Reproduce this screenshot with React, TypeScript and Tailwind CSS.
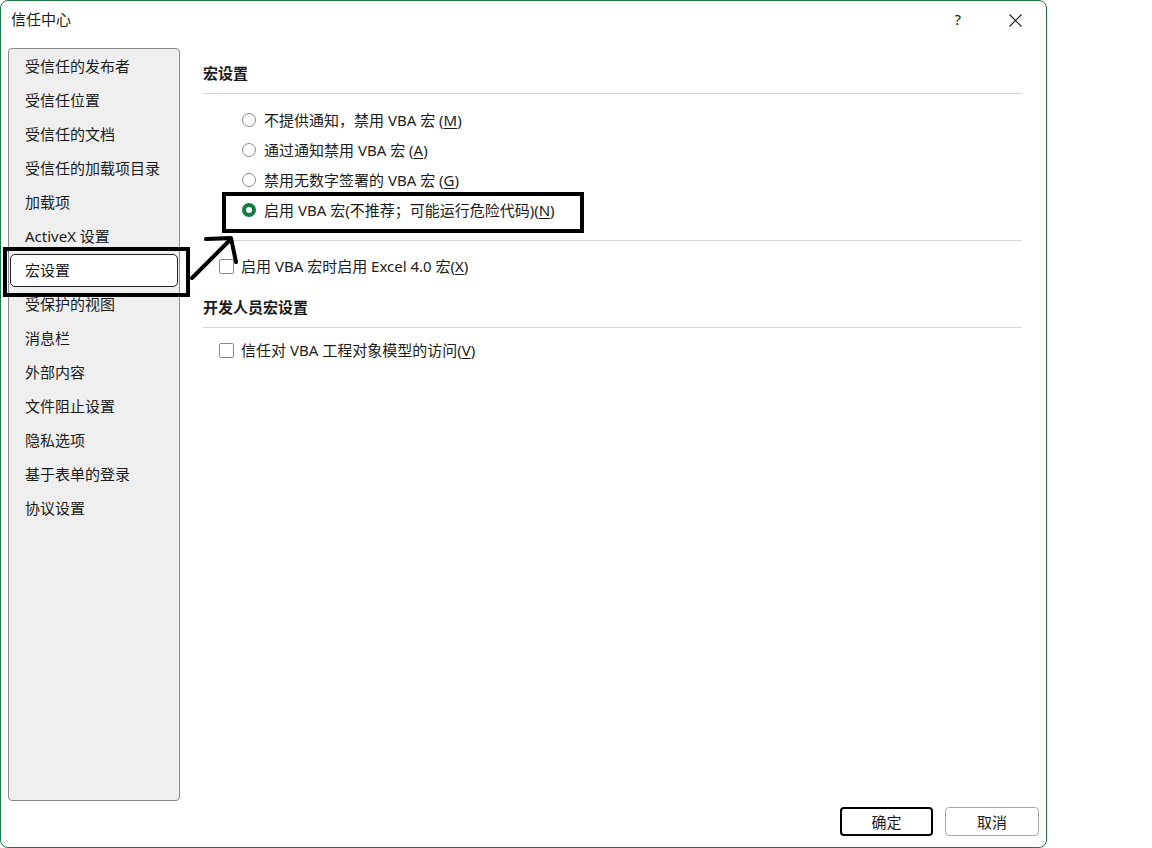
const font = { fontFamily: '"Noto Sans", "Noto Sans CJK SC", sans-serif' };

const navItems = [
  "受信任的发布者",
  "受信任位置",
  "受信任的文档",
  "受信任的加载项目录",
  "加载项",
  "ActiveX 设置",
  "宏设置",
  "受保护的视图",
  "消息栏",
  "外部内容",
  "文件阻止设置",
  "隐私选项",
  "基于表单的登录",
  "协议设置",
];

const radios = [
  { label: "不提供通知，禁用 VBA 宏 ", key: "M", checked: false },
  { label: "通过通知禁用 VBA 宏 ", key: "A", checked: false },
  { label: "禁用无数字签署的 VBA 宏 ", key: "G", checked: false },
  { label: "启用 VBA 宏(不推荐；可能运行危险代码)", key: "N", checked: true },
];

const Radio = ({ checked }: { checked: boolean }) =>
  checked ? (
    <span className="box-border h-[14px] w-[14px] shrink-0 rounded-full border-[4px] border-[#107c41] bg-white" />
  ) : (
    <span className="box-border h-[14px] w-[14px] shrink-0 rounded-full border border-[#8a8a8a] bg-white" />
  );

const Checkbox = () => (
  <span className="box-border h-[15px] w-[15px] shrink-0 rounded-[2px] border border-[#8a8a8a] bg-white" />
);

const Label = ({ text, k }: { text: string; k: string }) => (
  <span>
    {text}(<span className="underline underline-offset-2">{k}</span>)
  </span>
);

export default function App() {
  return (
    <div
      className="relative h-[848px] w-[1152px] overflow-hidden bg-white text-[15px] leading-[20px] text-[#1b1b1b]"
      style={font}
    >
      <div className="box-border flex h-[848px] w-[1047px] flex-col rounded-[8px] border border-[#1c7c46] bg-white">
        {/* title bar */}
        <div className="flex h-[47px] shrink-0 items-start">
          <span className="ml-[10px] mt-[8px]">信任中心</span>
          <span className="ml-auto mt-[8px]">?</span>
          <svg className="ml-[48px] mr-[24px] mt-[13px]" width="13" height="13" viewBox="0 0 13 13">
            <path d="M0.5 0.5 L12.5 12.5 M12.5 0.5 L0.5 12.5" stroke="#1b1b1b" strokeWidth="1.1" />
          </svg>
        </div>

        {/* body */}
        <div className="flex h-[753px] shrink-0 pl-[7px] pr-[24px]">
          <ul className="box-border w-[172px] shrink-0 rounded-[4px] border border-[#8a8a8a] bg-[#efefef] pt-[-1px]">
            {navItems.map((item) =>
              item === "宏设置" ? (
                <li key={item} className="flex h-[34px] items-center">
                  <span className="mx-[1px] box-border flex h-[33px] w-full items-center rounded-[5px] border border-[#222] bg-white pl-[14px]">
                    {item}
                  </span>
                </li>
              ) : (
                <li key={item} className="flex h-[34px] items-center pl-[16px]">
                  {item}
                </li>
              )
            )}
          </ul>

          <div className="ml-[23px] flex flex-1 flex-col pt-[15px]">
            <h2 className="font-bold">宏设置</h2>
            <div className="mt-[10px] h-px bg-[#d6d6d6]" />
            <div className="mt-[11px] flex flex-col pl-[39px]">
              {radios.map((r) => (
                <div key={r.key} className="flex h-[30px] items-center gap-[8px]">
                  <Radio checked={r.checked} />
                  <Label text={r.label} k={r.key} />
                </div>
              ))}
            </div>
            <div className="mt-[15px] h-px bg-[#d6d6d6]" />
            <div className="mt-[11px] flex h-[28px] items-center gap-[7px] pl-[16px]">
              <Checkbox />
              <Label text="启用 VBA 宏时启用 Excel 4.0 宏" k="X" />
            </div>
            <h2 className="mt-[17px] font-bold">开发人员宏设置</h2>
            <div className="mt-[10px] h-px bg-[#d6d6d6]" />
            <div className="mt-[8px] flex h-[28px] items-center gap-[7px] pl-[16px]">
              <Checkbox />
              <Label text="信任对 VBA 工程对象模型的访问" k="V" />
            </div>
          </div>
        </div>

        {/* footer */}
        <div className="flex flex-1 items-start justify-end gap-[12px] pr-[7px] pt-[6px]">
          <button className="box-border h-[29px] w-[93px] rounded-[4px] border-2 border-black bg-white">确定</button>
          <button className="box-border h-[29px] w-[94px] rounded-[4px] border border-[#a8a8a8] bg-white">取消</button>
        </div>
      </div>

      {/* annotations */}
      <div className="absolute left-[3px] top-[247px] h-[50px] w-[187px] border-[4px] border-black" />
      <div className="absolute left-[222px] top-[192px] h-[41px] w-[362px] border-[4px] border-black" />
      <svg className="absolute left-0 top-0" width="1152" height="848" viewBox="0 0 1152 848" fill="none">
        <path
          d="M192 278 L231 239 M206 239 L231 238 L236 262"
          stroke="black"
          strokeWidth="4"
          strokeLinecap="round"
          strokeLinejoin="round"
        />
      </svg>
    </div>
  );
}
